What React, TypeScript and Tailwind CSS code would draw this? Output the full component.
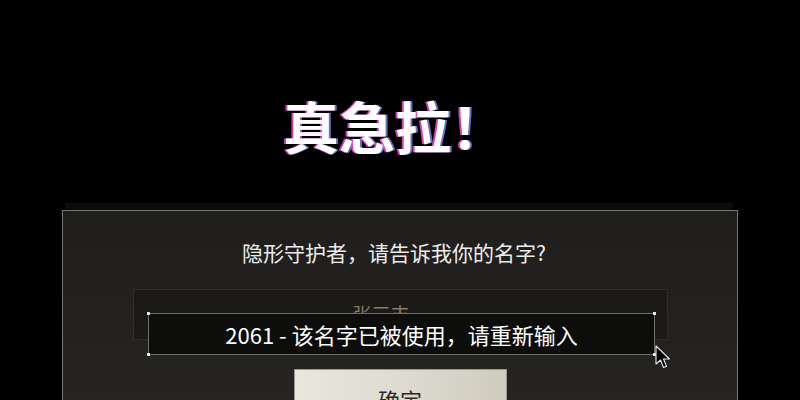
const FONT = "font-['Noto_Sans_CJK_SC','Noto_Sans',sans-serif]";

// corner marks on the toast frame
function CornerDots() {
  return (
    <>
      <span className="absolute -left-[2px] -top-[2px] w-[3px] h-[3px] bg-[#e6e6e6]" />
      <span className="absolute -right-[2px] -top-[2px] w-[3px] h-[3px] bg-[#e6e6e6]" />
      <span className="absolute -left-[2px] -bottom-[2px] w-[3px] h-[3px] bg-[#e6e6e6]" />
      <span className="absolute -right-[2px] -bottom-[2px] w-[3px] h-[3px] bg-[#e6e6e6]" />
    </>
  );
}

function Cursor() {
  return (
    <svg width="17" height="25" viewBox="0 0 17 25" className="absolute left-[655px] top-[345px]">
      <path d="M1 1 L1 19 L5.5 15 L8.5 22.5 L11.5 21.2 L8.5 14 L14.5 14 Z" fill="#000" stroke="#e8e8e8" strokeWidth="1.1" strokeLinejoin="round" />
    </svg>
  );
}

export default function App() {
  return (
    <div className={`relative w-[800px] h-[400px] overflow-hidden bg-black ${FONT}`}>
      {/* title */}
      <h1 className="pt-[97px] pr-[10px] text-center text-[56px] leading-none font-bold text-white [text-shadow:-2px_0_rgba(255,70,210,0.85),2px_0_rgba(140,150,255,0.75)]">
        真急拉！
      </h1>

      {/* shadow band above the dialog */}
      <div className="mt-[50px] ml-[65px] w-[668px] h-[7px] bg-[#0b0b0b]" />

      {/* dialog */}
      <div className="ml-[62px] w-[676px] h-[240px] border border-[#757572] bg-gradient-to-b from-[#1f1e1d] to-[#272622] flex flex-col items-center">
        <p className="pt-[27px] text-[21px] leading-[28px] text-[#ececec] -ml-[12px] shrink-0">
          隐形守护者，请告诉我你的名字?
        </p>
        <div className="mt-[23px] w-[535px] h-[51px] shrink-0 bg-[#1b1a18] border border-[#2f2e2b] flex items-center justify-center">
          <span className="pr-[38px] text-[19px] text-[#8c7c5e]">张三丰</span>
        </div>
        <button className="mt-[29px] w-[213px] h-[60px] shrink-0 border border-[#9a978d] bg-gradient-to-r from-[#e9e7de] via-[#dedbd0] to-[#cfcbbf] text-[22px] text-[#2b2a27] flex items-center justify-center">
          确定
        </button>
      </div>

      {/* error toast */}
      <div className="absolute left-[148px] top-[313px] w-[507px] h-[42px] bg-[#0d0d0c] border border-[#6e6e6b] flex items-center justify-center">
        <CornerDots />
        <span className="text-[22px] text-white">2061 - 该名字已被使用，请重新输入</span>
      </div>

      <Cursor />
    </div>
  );
}
